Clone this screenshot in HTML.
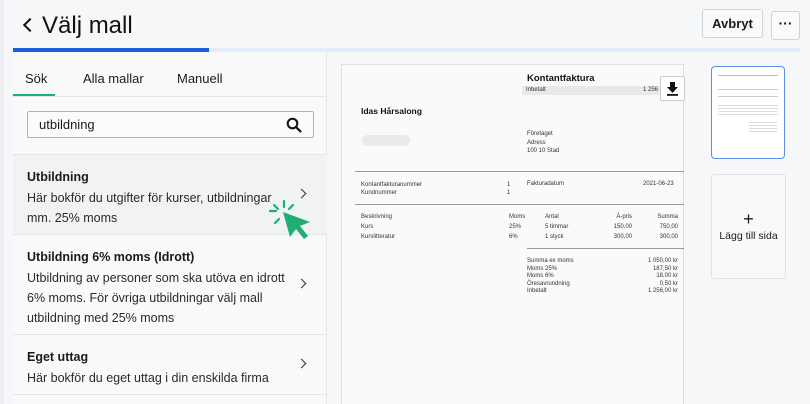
<!DOCTYPE html>
<html><head><meta charset="utf-8"><style>
*{box-sizing:border-box;margin:0;padding:0}
body{width:810px;height:404px;overflow:hidden;background:#f6f7f9;font-family:"Liberation Sans",sans-serif;color:#1b1b1b;position:relative}
.abs{position:absolute}
.doc{font-size:6px;color:#333}
.item{position:absolute;left:13px;width:314px;border-bottom:1px solid #e3e5e8;padding:15px 14px 0 14px}
.item b{display:block;font-size:12.5px;margin-bottom:4px}
.item p{font-size:12.5px;line-height:20px;color:#2a2a2a;width:265px}
.chev{position:absolute;right:22px;width:7px;height:7px;border-right:1.3px solid #333;border-top:1.3px solid #333;transform:rotate(45deg)}
</style></head><body>
<div class="abs" style="left:0;top:0;width:4px;height:404px;background:#eceef1"></div>
<div class="abs" style="left:25px;top:20px;width:10px;height:10px;border-left:2.5px solid #111;border-bottom:2.5px solid #111;transform:rotate(45deg)"></div>
<div class="abs" style="left:42px;top:12px;font-size:24px;color:#111">Välj mall</div>
<div class="abs" style="left:702px;top:9px;width:61px;height:29px;border:1px solid #cfd2d6;border-radius:3px;background:#fafafa;font-size:13px;font-weight:bold;text-align:center;line-height:27px">Avbryt</div>
<div class="abs" style="left:771px;top:11px;width:29px;height:29px;border:1px solid #cfd2d6;border-radius:3px;background:#fafafa;font-size:14px;font-weight:bold;text-align:center;line-height:22px">···</div>
<div class="abs" style="left:13px;top:48px;width:787px;height:4px;background:#e2ecfb"></div>
<div class="abs" style="left:13px;top:48px;width:196px;height:4px;background:#1a5fe0"></div>
<div class="abs" style="left:13px;top:52px;width:314px;height:352px;background:#f9f9fa;border-right:1px solid #e3e5e8"></div>
<div class="abs" style="left:25px;top:71px;font-size:13px">Sök</div>
<div class="abs" style="left:83px;top:71px;font-size:13px">Alla mallar</div>
<div class="abs" style="left:177px;top:71px;font-size:13px">Manuell</div>
<div class="abs" style="left:13px;top:94px;width:42px;height:2px;background:#1fae74"></div>
<div class="abs" style="left:13px;top:96px;width:314px;height:1px;background:#e3e5e8"></div>
<div class="abs" style="left:27px;top:111px;width:287px;height:27px;border:1.5px solid #8fb8ec;border-radius:2px;background:#fafbfc"></div>
<div class="abs" style="left:39px;top:117px;font-size:13px">utbildning</div>
<svg class="abs" style="left:286px;top:117px" width="16" height="16" viewBox="0 0 16 16"><circle cx="6.5" cy="6.5" r="4.8" fill="none" stroke="#111" stroke-width="2"/><path d="M10 10l4.5 4.5" stroke="#111" stroke-width="2.2" stroke-linecap="round"/></svg>
<div class="abs" style="left:13px;top:154px;width:314px;height:1px;background:#e3e5e8"></div>
<div class="item" style="top:155px;height:80px;background:#f1f2f4"><b>Utbildning</b><p>Här bokför du utgifter för kurser, utbildningar mm. 25% moms</p><div class="chev" style="top:35px"></div></div>
<div class="item" style="top:235px;height:100px;padding-top:15px"><b>Utbildning 6% moms (Idrott)</b><p>Utbildning av personer som ska utöva en idrott 6% moms. För övriga utbildningar välj mall utbildning med 25% moms</p><div class="chev" style="top:45px"></div></div>
<div class="item" style="top:335px;height:60px"><b>Eget uttag</b><p>Här bokför du eget uttag i din enskilda firma</p><div class="chev" style="top:25px"></div></div>
<svg class="abs" style="left:266px;top:198px" width="50" height="46" viewBox="0 0 50 46"><g stroke="#1fae74" stroke-width="2.2" stroke-linecap="round"><path d="M18 3v6M4 13h6M9 25l4-4M27 7l-4 4M8 7l4 4"/></g><path d="M17 14l27 10-10 4 8 10-4 3-8-10-6 8z" fill="#1fae74"/></svg>
<div class="abs" style="left:341px;top:64px;width:343px;height:340px;background:#fafafa;border:1px solid #dcdfe3;border-bottom:none"></div>
<div class="abs doc" style="left:527px;top:73px;font-size:9.5px;font-weight:bold;color:#111">Kontantfaktura</div>
<div class="abs doc" style="left:522px;top:86px;width:140px;height:9px;background:#e8e9eb;padding:1px 4px">Inbetalt<span style="position:absolute;right:4px">1 256</span></div>
<div class="abs" style="left:660px;top:76px;width:25px;height:25px;background:#fff;border:1px solid #ccc;border-radius:2px"></div>
<svg class="abs" style="left:665px;top:81px" width="15" height="15" viewBox="0 0 15 15"><path d="M5 1h5v5h3l-5.5 6L2 6h3z" fill="#111"/><rect x="2" y="13" width="11" height="1.8" fill="#111"/></svg>
<div class="abs doc" style="left:361px;top:106px;font-size:8.5px;font-weight:bold;color:#111">Idas Hårsalong</div>
<div class="abs" style="left:362px;top:135px;width:48px;height:11px;border-radius:6px;background:#e9eaec"></div>
<div class="abs doc" style="left:527px;top:130px;line-height:8.5px">Företaget<br>Adress<br>100 10 Stad</div>
<div class="abs" style="left:355px;top:171px;width:329px;height:1px;background:#999"></div>
<div class="abs doc" style="left:361px;top:181px;line-height:8px">Kontantfakturanummer<br>Kundnummer</div>
<div class="abs doc" style="left:507px;top:181px;line-height:8px">1<br>1</div>
<div class="abs doc" style="left:527px;top:181px">Fakturadatum</div>
<div class="abs doc" style="left:643px;top:181px">2021-06-23</div>
<div class="abs" style="left:355px;top:204px;width:329px;height:1px;background:#999"></div>
<div class="abs doc" style="left:361px;top:212px;line-height:10px">Beskrivning<br>Kurs<br>Kurslitteratur</div>
<div class="abs doc" style="left:509px;top:212px;line-height:10px">Moms<br>25%<br>6%</div>
<div class="abs doc" style="left:545px;top:212px;line-height:10px">Antal<br>5 timmar<br>1 styck</div>
<div class="abs doc" style="left:610px;top:212px;line-height:10px;text-align:right;width:22px">À-pris<br>150,00<br>300,00</div>
<div class="abs doc" style="left:650px;top:212px;line-height:10px;text-align:right;width:28px">Summa<br>750,00<br>300,00</div>
<div class="abs" style="left:527px;top:248px;width:157px;height:1px;background:#999"></div>
<div class="abs doc" style="left:527px;top:258px;line-height:7.5px">Summa ex moms<br>Moms 25%<br>Moms 6%<br>Öresavrundning<br>Inbetalt</div>
<div class="abs doc" style="left:630px;top:258px;line-height:7.5px;text-align:right;width:48px">1 050,00 kr<br>187,50 kr<br>18,00 kr<br>0,50 kr<br>1 256,00 kr</div>
<div class="abs" style="left:711px;top:66px;width:74px;height:93px;border:1.5px solid #5b8fe8;border-radius:4px;background:#fff"></div>
<div class="abs" style="left:718px;top:75px;width:60px;height:1px;background:#bbb"></div>
<div class="abs" style="left:718px;top:89px;width:60px;height:1px;background:#ccc"></div>
<div class="abs" style="left:718px;top:96px;width:60px;height:1px;background:#ccc"></div>
<div class="abs" style="left:718px;top:103px;width:60px;height:14px;background:repeating-linear-gradient(#fff 0 2px,#ddd 2px 3px)"></div>
<div class="abs" style="left:749px;top:120px;width:28px;height:12px;background:repeating-linear-gradient(#fff 0 2px,#ddd 2px 3px)"></div>
<div class="abs" style="left:711px;top:174px;width:75px;height:105px;border:1px solid #e0e2e5;border-radius:3px;background:#f9f9fa"></div>
<div class="abs" style="left:711px;top:210px;width:75px;text-align:center;font-size:18px;line-height:18px">+</div>
<div class="abs" style="left:711px;top:230px;width:75px;text-align:center;font-size:10.5px">Lägg till sida</div>
</body></html>
